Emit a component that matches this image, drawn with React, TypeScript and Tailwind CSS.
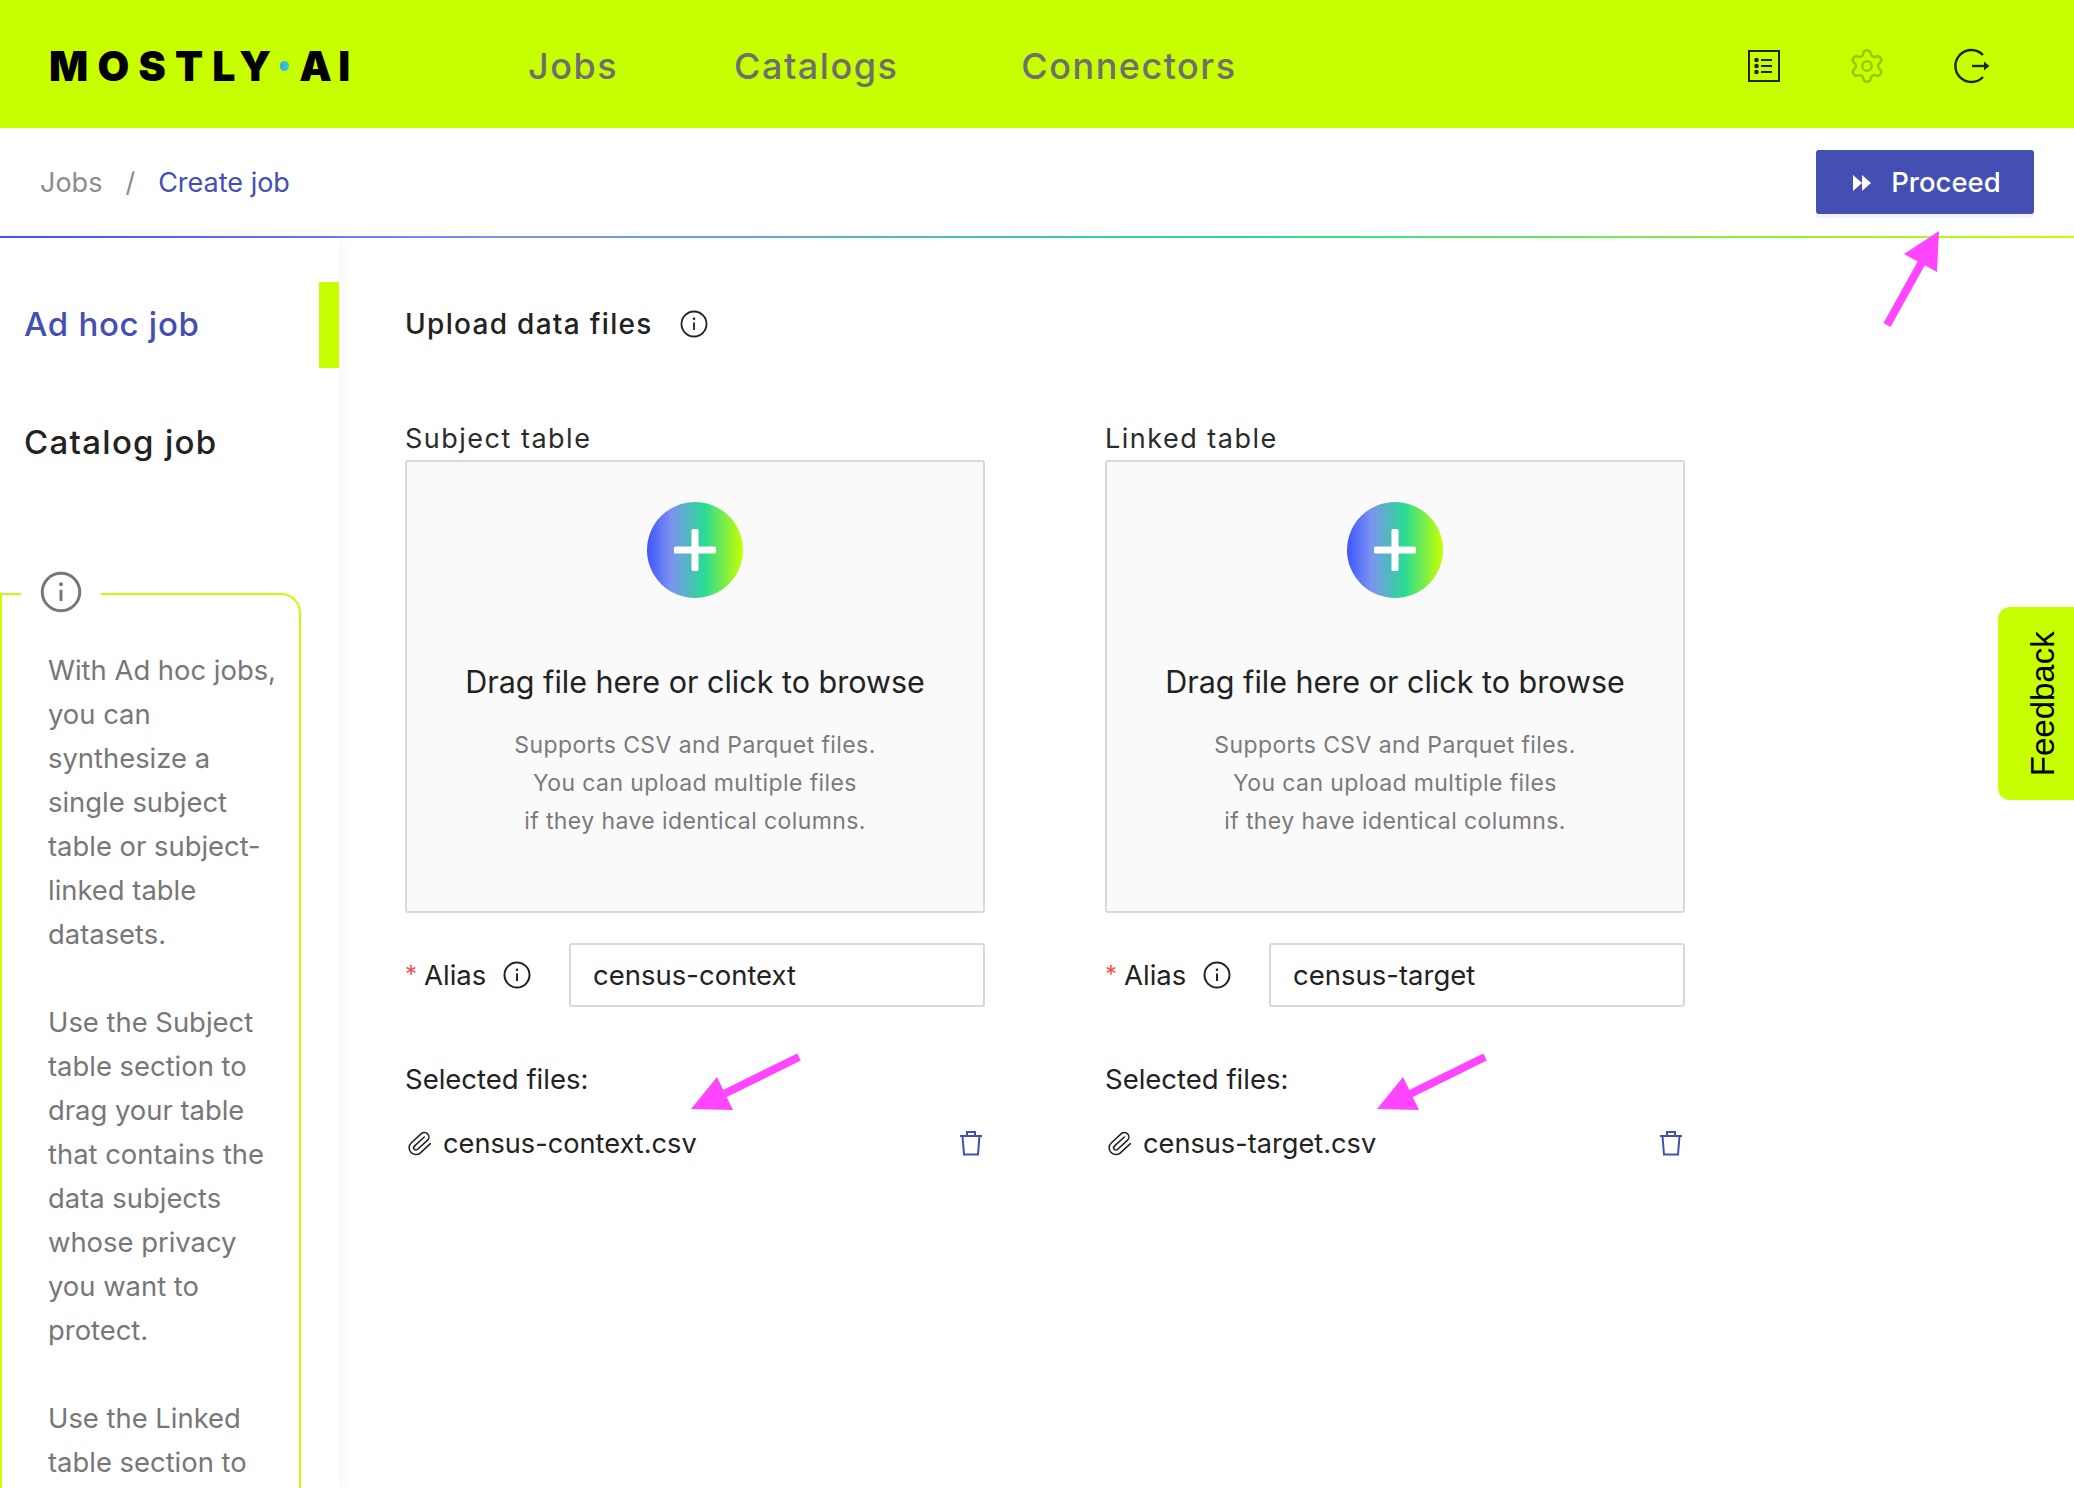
import { Paperclip, Settings } from "lucide-react";

const InfoIcon = ({ className, stroke = 2 }: { className: string; stroke?: number }) => (
    <svg viewBox="0 0 28 28" fill="none" stroke="currentColor" className={className}>
        <circle cx="14" cy="14" r="12.5" strokeWidth={stroke} />
        <circle cx="14" cy="8.8" r="1.3" fill="currentColor" stroke="none" />
        <path d="M14 12.5V20" strokeWidth={stroke} />
    </svg>
);

const TrashIcon = () => (
    <svg viewBox="0 0 24 26" fill="none" stroke="#434fb2" strokeWidth="2" className="w-[24px] h-[26px] mr-[2px]">
        <path d="M1 6H23" />
        <path d="M8 5.500V2H16V5.500" />
        <path d="M3.500 6L5 24.500H19L20.500 6" />
    </svg>
);

const Arrow = ({ className, viewBox, tail, head }: { className: string; viewBox: string; tail: string; head: string }) => (
    <svg viewBox={viewBox} className={`absolute pointer-events-none ${className}`}>
        <path d={tail} fill="none" stroke="#ff45ff" strokeWidth="8" />
        <polygon points={head} fill="#ff45ff" />
    </svg>
);

const UploadColumn = ({ label, alias, file }: { label: string; alias: string; file: string }) => (
    <div className="w-[580px]">
        <p className="text-[27px] leading-[33px] mb-[5px] text-[#2b2b2b] tracking-[1.500px]">{label}</p>
        <div className="h-[453px] border-2 border-[#d9d9d9] rounded-[3px] bg-[#fafafa] pt-[40px] flex flex-col items-center">
            <div className="w-[96px] h-[96px] rounded-full flex items-center justify-center bg-[linear-gradient(90deg,#3d55ff_0%,#7c93f0_25%,#2adb94_60%,#c8ff00_100%)]">
                <svg viewBox="0 0 42 42" className="w-[42px] h-[42px]" fill="#fff">
                    <rect x="0" y="17.500" width="42" height="7" rx="1.500" />
                    <rect x="17.500" y="0" width="7" height="42" rx="1.500" />
                </svg>
            </div>
            <h3 className="mt-[64px] text-[30.500px] leading-[40px] text-[#222]">Drag file here or click to browse</h3>
            <div className="mt-[24px] text-[23px] leading-[38px] text-[#7a7a7a] text-center tracking-[0.4px]">
                <p>Supports CSV and Parquet files.</p>
                <p>You can upload multiple files</p>
                <p>if they have identical columns.</p>
            </div>
        </div>
        <div className="mt-[30px] h-[64px] flex items-center">
            <span className="w-[19px] text-[#ff4d4f] text-[24px] leading-none">*</span>
            <span className="w-[79px] pt-[1px] text-[27.500px] text-[#222]">Alias</span>
            <InfoIcon className="w-[28px] h-[28px] text-[#222]" />
            <div className="ml-[38px] flex-1 h-[64px] border-2 border-[#d9d9d9] rounded-[3px] flex items-center px-[22px] pt-[1px] text-[27.500px] text-[#222]">
                {alias}
            </div>
        </div>
        <p className="mt-[56px] text-[27.500px] leading-[32px] text-[#222]">Selected files:</p>
        <div className="mt-[32px] h-[32px] flex items-center">
            <Paperclip className="w-[27px] h-[27px] text-[#222] ml-[1px] mr-[10px] rotate-[3deg]" strokeWidth={1.400} />
            <span className="flex-1 pt-[1px] text-[27.200px] leading-[32px] text-[#222]">{file}</span>
            <TrashIcon />
        </div>
    </div>
);

const App = () => {
    return (
        <div className="relative w-[2074px] h-[1488px] overflow-hidden bg-white font-['Inter',sans-serif]">
            <header className="h-[128px] bg-[#c8ff00] flex items-center pt-[4px] pl-[49px] pr-[84px]">
                <div className="flex items-center w-[479px] font-black text-[41px] leading-none text-black">
                    <span className="tracking-[9.200px]">MOSTLY</span>
                    <span className="w-[9px] h-[10px] mr-[3px] rounded-full bg-[linear-gradient(90deg,#3d9bff,#2adbc0)]" />
                    <span className="ml-[7px] tracking-[6.500px]">AI</span>
                </div>
                <nav className="flex text-[36px] font-medium text-[#6f6f6f] tracking-[1.500px]">
                    <span className="mr-[116px]">Jobs</span>
                    <span className="mr-[123px]">Catalogs</span>
                    <span>Connectors</span>
                </nav>
                <div className="ml-auto flex items-center gap-[68px] text-[#222]">
                    <svg viewBox="0 0 32 32" className="w-[32px] h-[32px]" fill="none" stroke="currentColor" strokeWidth="2">
                        <rect x="1" y="1" width="30" height="30" />
                        <path d="M13 10H24M13 16H24M13 22H24" />
                        <circle cx="8.500" cy="10" r="1.300" fill="currentColor" />
                        <circle cx="8.500" cy="16" r="1.300" fill="currentColor" />
                        <circle cx="8.500" cy="22" r="1.300" fill="currentColor" />
                    </svg>
                    <Settings className="w-[38px] h-[38px] text-[#9dc70a]" strokeWidth={1.600} />
                    <svg viewBox="0 0 36 36" className="w-[36px] h-[36px]" fill="none" stroke="currentColor" strokeWidth="2.400">
                        <path d="M29 7A16 16 0 1 0 29 29" />
                        <path d="M18 18H32" />
                        <polygon points="30,13.500 35.500,18 30,22.500" fill="currentColor" stroke="none" />
                    </svg>
                </div>
            </header>

            <div className="h-[108px] flex items-center pl-[40px] pr-[40px]">
                <div className="flex items-center pt-[2px] text-[27px]">
                    <span className="text-[#8c8c8c]">Jobs</span>
                    <span className="text-[#8c8c8c] mx-[23px]">/</span>
                    <span className="text-[#434fb2]">Create job</span>
                </div>
                <button className="ml-auto w-[218px] h-[64px] rounded-[3px] bg-[#434fb2] shadow-[0_4px_0_#f1f3f5] flex items-center justify-center gap-[20px] text-white text-[27.500px] font-medium pl-[4px] pt-[1px]">
                    <svg viewBox="0 0 18 16" className="w-[18px] h-[16px]" fill="#fff">
                        <polygon points="0,0 9,8 0,16" />
                        <polygon points="9,0 18,8 9,16" />
                    </svg>
                    Proceed
                </button>
            </div>
            <div className="h-[2px] bg-[linear-gradient(90deg,#3d55ff_0%,#7c93f0_25%,#2adb94_60%,#c8ff00_100%)]" />

            <div className="flex h-[1250px]">
                <aside className="relative w-[339px] shrink-0 bg-white pt-[44px] shadow-[0_0_16px_rgba(0,0,0,0.06)]">
                    <div className="h-[86px] flex items-center justify-between pl-[24px] border-r-[20px] border-[#c8ff00] text-[33px] font-medium tracking-[0.700px] text-[#434fb2]">
                        Ad hoc job
                    </div>
                    <div className="mt-[32px] h-[86px] flex items-center pl-[24px] text-[33px] font-medium tracking-[1.300px] text-[#222]">
                        Catalog job
                    </div>
                    <div className="relative mt-[107px] w-[301px] h-[900px] border-2 border-[#c8ff00] rounded-tr-[20px] pt-[53px] pl-[46px] pr-[12px] text-[27.400px] leading-[44px] text-[#777]">
                        <div className="absolute top-[-25px] left-[19px] w-[80px] h-[44px] bg-white flex items-center justify-center">
                            <InfoIcon className="w-[42px] h-[42px] text-[#777]" stroke={2} />
                        </div>
                        <p>With Ad hoc jobs, you can synthesize a single subject table or subject-linked table datasets.</p>
                        <p className="mt-[44px]">Use the Subject table section to drag your table that contains the data subjects whose privacy you want to protect.</p>
                        <p className="mt-[44px]">Use the Linked table section to</p>
                    </div>
                </aside>
                <main className="flex-1 pl-[66px] pt-[68px]">
                    <div className="h-[36px] flex items-center gap-[27px]">
                        <h2 className="text-[28px] font-medium tracking-[1.300px] text-[#222]">Upload data files</h2>
                        <InfoIcon className="w-[28px] h-[28px] text-[#222]" stroke={1.800} />
                    </div>
                    <div className="mt-[80px] flex gap-[120px]">
                        <UploadColumn label="Subject table" alias="census-context" file="census-context.csv" />
                        <UploadColumn label="Linked table" alias="census-target" file="census-target.csv" />
                    </div>
                </main>
            </div>

            <div className="absolute left-[1998px] top-[607px] w-[76px] h-[193px] bg-[#c8ff00] rounded-l-[12px] flex items-center justify-center pl-[12px]">
                <span className="-rotate-90 text-[33px] text-black font-['Liberation_Sans',sans-serif]">Feedback</span>
            </div>

            <Arrow className="left-[1880px] top-[227px] w-[64px] h-[100px]" viewBox="1880 228 64 100" tail="M1887 326L1922 263" head="1939,232 1904,255 1937,273" />
            <Arrow className="left-[687px] top-[1052px] w-[120px] h-[62px]" viewBox="690 1052 120 62" tail="M802 1057L725 1095" head="694,1109 720,1077 736,1110" />
            <Arrow className="left-[1373px] top-[1052px] w-[120px] h-[62px]" viewBox="690 1052 120 62" tail="M802 1057L725 1095" head="694,1109 720,1077 736,1110" />
        </div>
    );
};

export default App;
